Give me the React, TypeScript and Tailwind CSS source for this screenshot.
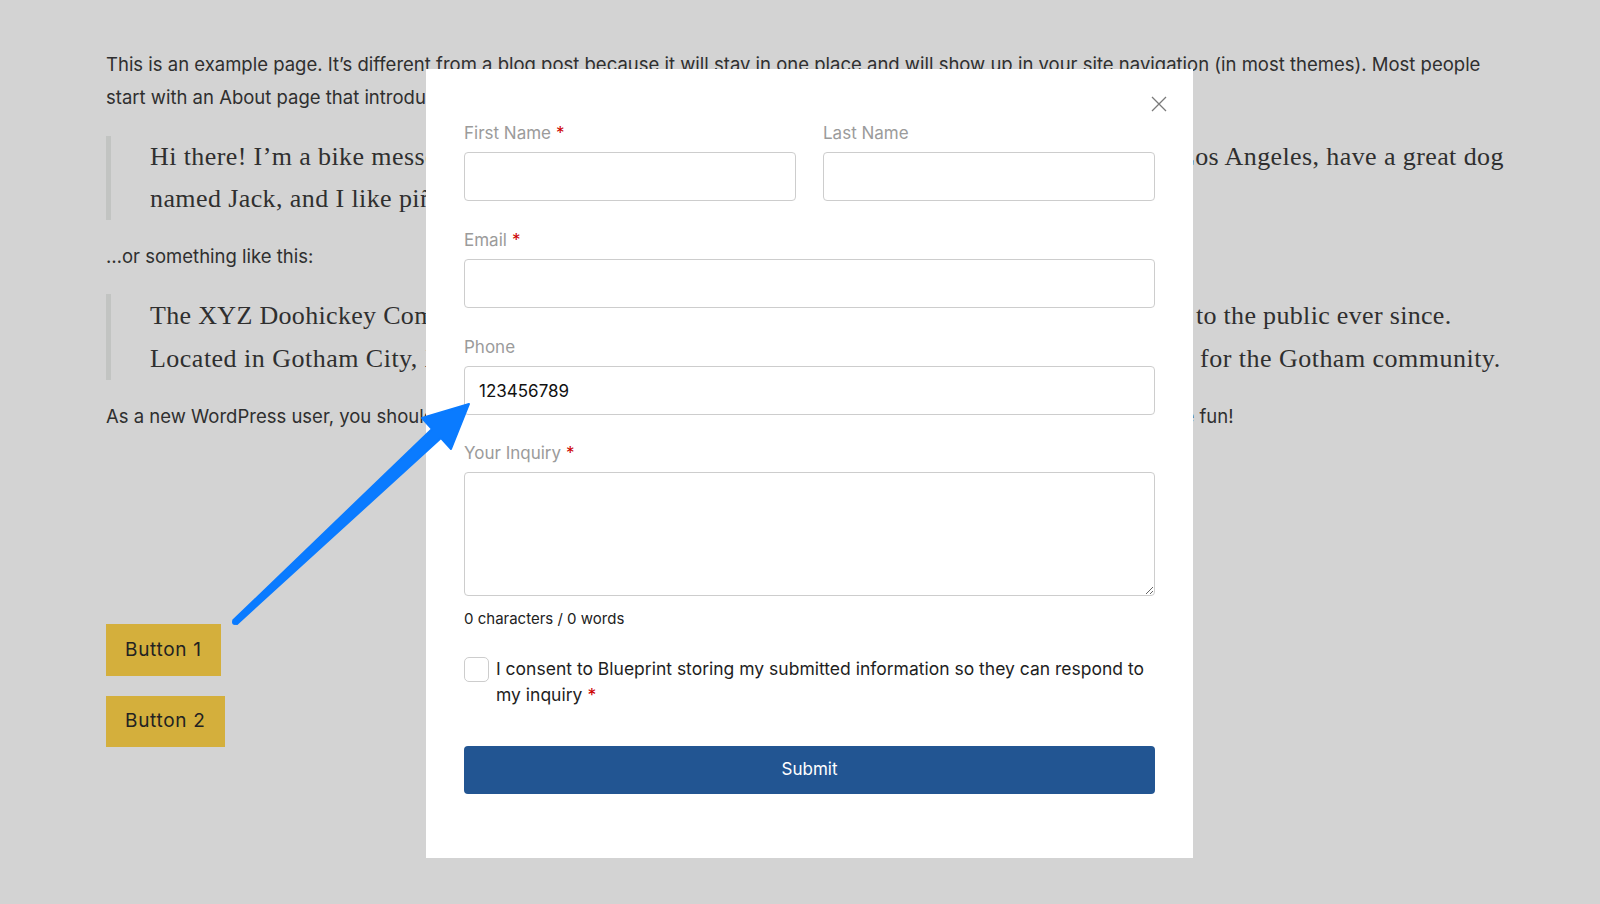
import { useState } from "react";

const SANS = "font-['Inter','Liberation_Sans',sans-serif]";
const SERIF = "font-['Liberation_Serif','DejaVu_Serif',serif]";

function Req() {
  return <span className="text-[#cc0000] ml-[5px]">*</span>;
}

function Field({
  label,
  required,
  value,
}: {
  label: string;
  required?: boolean;
  value?: string;
}) {
  return (
    <div className="flex flex-col">
      <label className="text-[17px] leading-[22px] text-[#9b9b9b] mb-[8px]">
        {label}
        {required && <Req />}
      </label>
      <input
        type="text"
        defaultValue={value}
        className="h-[49px] w-full rounded-[4px] border border-[#cdcdcd] bg-white px-[14px] text-[17px] text-[#111] outline-none"
      />
    </div>
  );
}

export default function App() {
  const [text, setText] = useState("");
  const words = text.trim() ? text.trim().split(/\s+/).length : 0;

  return (
    <div className={`relative w-full h-[904px] overflow-hidden bg-[#d3d3d3] ${SANS}`}>
      {/* page content behind the popup */}
      <div className="pt-[48px] pl-[106px] text-[#2f2f2f] whitespace-nowrap">
        <p className="text-[18.5px] leading-[33px]">
          This is an example page. It’s different from a blog post because it will stay in one place and will show up in your site navigation (in most themes). Most people
          <br />
          start with an About page that introduces them to potential site visitors. It might say something like this:
        </p>
        <blockquote className={`mt-[22px] border-l-[5px] border-[#c2c4c2] pl-[39px] text-[26px] leading-[42px] ${SERIF}`}>
          <span className="tracking-[0.4px]">
            Hi there! I’m a bike messenger by day, aspiring actor by night, and this is my website. I live in Los Angeles, have a great dog
          </span>
          <br />
          <span className="tracking-[0.4px]">named Jack, and I like piña coladas. (And gettin’ caught in the rain.)</span>
        </blockquote>
        <p className="mt-[20px] text-[18.5px] leading-[33px]">…or something like this:</p>
        <blockquote className={`mt-[21px] border-l-[5px] border-[#c2c4c2] pl-[39px] text-[26px] leading-[43px] ${SERIF}`}>
          <span className="tracking-[0.32px]">
            The XYZ Doohickey Company was founded in 1971, and has been providing quality doohickeys to the public ever since.
          </span>
          <br />
          <span className="tracking-[0.48px]">
            Located in Gotham City, XYZ employs over 2,000 people and does all kinds of awesome things for the Gotham community.
          </span>
        </blockquote>
        <p className="mt-[20px] text-[18.5px] leading-[33px]">
          As a new WordPress user, you should go to your dashboard to delete this page and create new pages for your content. Have fun!
        </p>

        <div className="mt-[191px] flex flex-col items-start gap-[20px]">
          <button className="h-[52px] bg-[#d4af3c] px-[19px] text-[19px] tracking-[0.7px] text-[#222]">Button 1</button>
          <button className="h-[51px] bg-[#d4af3c] px-[19px] text-[19px] tracking-[0.7px] text-[#222]">Button 2</button>
        </div>
      </div>

      {/* popup */}
      <div className="absolute left-[426px] top-[69px] w-[767px] h-[789px] bg-white px-[38px] pt-[53px]">
        <button className="absolute left-[723px] top-[25px] p-[2px]" aria-label="Close">
          <svg width="16" height="16" viewBox="0 0 16 16" fill="none" stroke="#7a7a7a" strokeWidth="1.3">
            <path d="M1 1L15 15M15 1L1 15" />
          </svg>
        </button>

        <div className="grid grid-cols-2 gap-x-[27px]">
          <Field label="First Name" required />
          <Field label="Last Name" />
        </div>
        <div className="mt-[28px]">
          <Field label="Email" required />
        </div>
        <div className="mt-[28px]">
          <Field label="Phone" value="123456789" />
        </div>
        <div className="mt-[27px] flex flex-col">
          <label className="text-[17px] leading-[22px] text-[#9b9b9b] mb-[8px]">
            Your Inquiry
            <Req />
          </label>
          <textarea
            value={text}
            onChange={(e) => setText(e.target.value)}
            className="h-[124px] w-full rounded-[4px] border border-[#cdcdcd] px-[14px] py-[10px] text-[17px] outline-none resize-y"
          />
          <div className="mt-[13px] text-[15px] leading-[20px] text-[#222]">
            {text.length} characters / {words} words
          </div>
        </div>

        <label className="mt-[27px] flex items-start gap-[7px] text-[17.5px] leading-[26px] text-[#1e1e1e]">
          <input
            type="checkbox"
            className="mt-px h-[25px] w-[25px] shrink-0 appearance-none rounded-[5px] border border-[#cdcdcd] bg-white"
          />
          <span>
            I consent to Blueprint storing my submitted information so they can respond to my inquiry
            <Req />
          </span>
        </label>

        <button className="mt-[38px] h-[48px] w-full rounded-[4px] bg-[#225592] text-[17px] text-white">
          Submit
        </button>
      </div>

      {/* annotation arrow */}
      <svg className="absolute left-0 top-0 pointer-events-none" width="1600" height="904">
        <path
          d="M233.5 620 L432 429 L422 418 L469 404 L451 449 L441 438 L237 624 Z"
          fill="#0a7bff"
          stroke="#0a7bff"
          strokeWidth="2"
          strokeLinejoin="round"
        />
        <circle cx="235" cy="622" r="3" fill="#0a7bff" />
      </svg>
    </div>
  );
}
